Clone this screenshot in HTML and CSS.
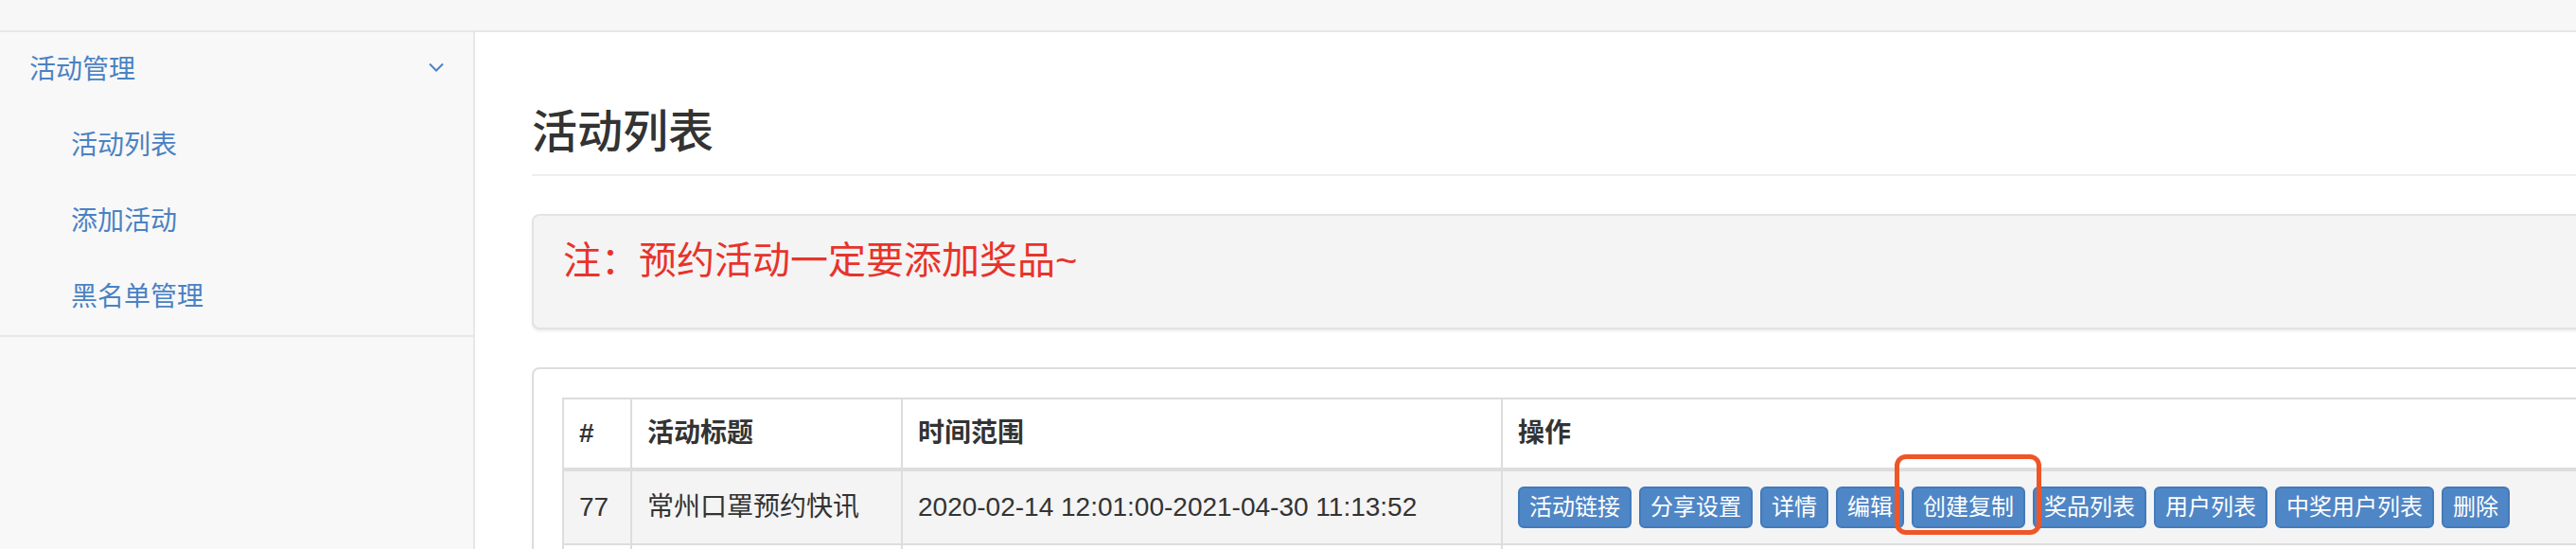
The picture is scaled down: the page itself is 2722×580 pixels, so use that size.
FILE: index.html
```html
<!DOCTYPE html>
<html lang="zh-CN">
<head>
  <meta charset="UTF-8" />
  <title>活动列表</title>
  <link rel="stylesheet" href="styles.css">
</head>
<body>
  <div class="navbar"></div>
  <div class="layout">
    <div class="sidebar">
      <ul class="menu">
        <li class="menu-head">
          <span>活动管理</span>
          <svg class="chevron" width="16" height="11" viewBox="0 0 16 11"><polyline points="1,1.5 8,8.5 15,1.5" fill="none" stroke="#4a82c3" stroke-width="2"/></svg>
        </li>
        <li class="menu-item">活动列表</li>
        <li class="menu-item">添加活动</li>
        <li class="menu-item">黑名单管理</li>
      </ul>
    </div>

    <div class="main">
      <h3 class="page-header">活动列表</h3>

      <div class="well">
        <p class="notice">注：预约活动一定要添加奖品~</p>
      </div>

      <div class="panel">
        <table class="table">
          <thead>
            <tr>
              <th class="col-id">#</th>
              <th class="col-title">活动标题</th>
              <th class="col-time">时间范围</th>
              <th>操作</th>
            </tr>
          </thead>
          <tbody>
            <tr class="odd">
              <td>77</td>
              <td>常州口罩预约快讯</td>
              <td>2020-02-14 12:01:00-2021-04-30 11:13:52</td>
              <td>
                <div class="actions">
                  <a class="btn">活动链接</a>
                  <a class="btn">分享设置</a>
                  <a class="btn">详情</a>
                  <a class="btn">编辑</a>
                  <span class="mark"><a class="btn">创建复制</a></span>
                  <a class="btn">奖品列表</a>
                  <a class="btn">用户列表</a>
                  <a class="btn">中奖用户列表</a>
                  <a class="btn">删除</a>
                </div>
              </td>
            </tr>
            <tr class="blank">
              <td></td>
              <td></td>
              <td></td>
              <td></td>
            </tr>
          </tbody>
        </table>
      </div>
    </div>
  </div>
</body>
</html>
```

FILE: styles.css
```css
body {
  margin: 0;
  overflow: hidden;
  font-family: "Liberation Sans", "Noto Sans CJK SC", sans-serif;
  font-size: 28px;
  line-height: 40px;
  color: #333;
  background: #fff;
}
.navbar {
  height: 32px;
  background: #f7f7f7;
  border-bottom: 2px solid #e7e7e7;
}
.layout {
  display: flex;
}

/* sidebar */
.sidebar {
  flex: none;
  width: 500px;
  min-height: 546px;
  background: #f8f8f8;
  border-right: 2px solid #e7e7e7;
}
.menu {
  list-style: none;
  margin: 0;
  padding: 0;
  border-bottom: 2px solid #e7e7e7;
}
.menu li {
  height: 80px;
  display: flex;
  align-items: center;
  color: #4a82c3;
}
.menu-head {
  padding-left: 31px;
  padding-right: 31px;
  justify-content: space-between;
}
.chevron {
  margin-top: -6px;
}
.menu-item {
  padding-left: 75px;
}

/* main */
.main {
  flex: none;
  width: 2500px;
  padding-left: 60px;
}
.page-header {
  margin: 79px 0 40px;
  padding-bottom: 18px;
  border-bottom: 2px solid #eee;
  font-size: 48px;
  line-height: 53px;
  font-weight: 500;
  color: #333;
}
.well {
  background: #f4f4f4;
  border: 2px solid #e3e3e3;
  border-radius: 8px;
  box-shadow: 0 2px 3px rgba(0, 0, 0, 0.08);
  padding: 25px 31px 49px;
  margin-bottom: 40px;
}
.notice {
  margin: 0;
  font-size: 40px;
  line-height: 44px;
  color: #e8332b;
}
.panel {
  border: 2px solid #ddd;
  border-radius: 8px;
  padding: 30px;
  background: #fff;
}
.table {
  width: 100%;
  border-collapse: collapse;
  table-layout: fixed;
  border: 2px solid #ddd;
}
.table th, .table td {
  border: 2px solid #ddd;
  padding: 16px;
  text-align: left;
  vertical-align: middle;
  white-space: nowrap;
}
.table th {
  font-weight: bold;
  border-bottom-width: 4px;
}
.col-id { width: 38px; }
.col-title { width: 252px; }
.col-time { width: 600px; }
.table tr.odd td {
  background: #f4f4f4;
}
.table tr.blank td {
  height: 44px;
}
.actions {
  display: flex;
  gap: 8px;
}
.btn {
  display: block;
  padding: 2px 10px;
  font-size: 24px;
  line-height: 36px;
  color: #fff;
  background: #4f86c6;
  border: 2px solid #437abb;
  border-radius: 6px;
}
.mark {
  position: relative;
  display: block;
}
.mark::after {
  content: "";
  position: absolute;
  left: -18px;
  right: -17px;
  top: -34px;
  bottom: -7px;
  border: 5px solid #ef5527;
  border-radius: 12px;
}
```
